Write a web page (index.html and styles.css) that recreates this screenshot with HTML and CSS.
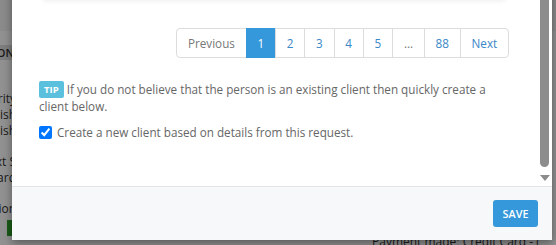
FILE: index.html
```html
<!DOCTYPE html>
<html lang="en">
<head>
    <meta charset="UTF-8">
    <title>New client</title>
    <link rel="stylesheet" href="styles.css">
</head>
<body>
    <!-- page behind the dialog -->
    <div class="page">
        <div class="page-rule"></div>
        <div class="page-head"><span>ACTION</span></div>
        <div class="page-rows">
            <div class="page-row"><span>Priority</span></div>
            <div class="page-row"><span>English</span></div>
            <div class="page-row"><span>English</span></div>
            <div class="page-row spaced"><span>Next S</span></div>
            <div class="page-row"><span>Standard</span></div>
            <div class="page-row spaced"><span>Action</span></div>
            <div class="page-row"><span class="page-btn"></span></div>
        </div>
        <div class="page-foot">Payment made; Credit Card - (</div>
    </div>
    <div class="backdrop"></div>

    <div class="modal">
        <div class="modal-main">
            <div class="modal-body">
                <div class="result-card"></div>

                <nav class="pagination">
                    <a class="page-link muted">Previous</a>
                    <a class="page-link active">1</a>
                    <a class="page-link">2</a>
                    <a class="page-link">3</a>
                    <a class="page-link">4</a>
                    <a class="page-link">5</a>
                    <a class="page-link muted">…</a>
                    <a class="page-link">88</a>
                    <a class="page-link">Next</a>
                </nav>

                <p class="tip"><span class="tip-label">TIP</span> If you do not believe that the person is an existing client then quickly create a client below.</p>

                <label class="check">
                    <input type="checkbox" checked>
                    <span>Create a new client based on details from this request.</span>
                </label>
            </div>
            <div class="scrollbar">
                <div class="scroll-thumb"></div>
                <div class="scroll-arrow"></div>
            </div>
        </div>
        <div class="modal-footer">
            <button class="btn-save">Save</button>
        </div>
    </div>
</body>
</html>
```

FILE: styles.css
```css
* {
    margin: 0;
    padding: 0;
    box-sizing: border-box;
}

body {
    font-family: 'Open Sans', 'Noto Sans', sans-serif;
    font-size: 11.7px;
    color: #666;
    width: 556px;
    height: 245px;
    overflow: hidden;
    position: relative;
    background: #fff;
}

/* Страница под диалогом */
.page {
    height: 245px;
    display: flex;
    flex-direction: column;
    color: #333;
    font-size: 12px;
}

.page-rule {
    height: 38px;
    border-bottom: 1px solid #fff;
    background: #f5f5f5;
}

.page-head {
    margin-top: 13px;
    height: 18px;
    width: 14px;
    background: #ddd;
    display: flex;
    justify-content: flex-end;
    align-items: center;
    font-weight: 600;
    font-size: 11px;
    white-space: nowrap;
}

.page-rows {
    width: 16px;
    padding-top: 31px;
}

.page-row {
    display: flex;
    justify-content: flex-end;
    height: 16px;
    line-height: 16px;
    white-space: nowrap;
}

.page-row.spaced {
    margin-top: 15px;
}

.page-btn {
    width: 9px;
    height: 16px;
    margin-top: 3px;
    background: #2fa12a;
    border-radius: 0 3px 3px 0;
}

.page-foot {
    margin-top: auto;
    margin-bottom: -5px;
    padding-left: 372px;
    line-height: 17px;
    white-space: nowrap;
}

.backdrop {
    position: absolute;
    inset: 0;
    background: rgba(0, 0, 0, 0.43);
}

/* Диалог */
.modal {
    position: absolute;
    left: 12px;
    top: -40px;
    bottom: 5px;
    width: 540px;
    display: flex;
    flex-direction: column;
    background: #fff;
    box-shadow: 0 3px 9px rgba(0, 0, 0, 0.4);
}

.modal-main {
    flex: 1;
    display: flex;
    min-height: 0;
}

.modal-body {
    flex: 1;
    padding: 0 28px 0 27px;
}

.result-card {
    height: 40px;
    margin: 0 4px;
    box-shadow: 0 1px 5px rgba(0, 0, 0, 0.07);
}

.pagination {
    display: flex;
    justify-content: flex-end;
    margin-top: 28px;
}

.page-link {
    border: 1px solid #ddd;
    margin-left: -1px;
    padding: 0 10.8px;
    height: 30px;
    line-height: 28px;
    color: #3a87c8;
    cursor: pointer;
}

.page-link:first-child {
    border-radius: 4px 0 0 4px;
}

.page-link:last-child {
    border-radius: 0 4px 4px 0;
}

.page-link.muted {
    color: #777;
}

.page-link.active {
    background: #3498db;
    border-color: #3498db;
    color: #fff;
}

.tip {
    margin-top: 23px;
    line-height: 17px;
}

.tip-label {
    display: inline-block;
    background: #5bc0de;
    color: #fff;
    font-size: 9.5px;
    font-weight: 700;
    line-height: 17px;
    padding: 0 5px;
    border-radius: 2px;
    vertical-align: top;
}

.check {
    display: flex;
    align-items: center;
    gap: 5px;
    margin-top: 9px;
    line-height: 17px;
}

.check input {
    width: 13px;
    height: 13px;
    margin: 0;
    accent-color: #0075ff;
}

/* Полоса прокрутки */
.scrollbar {
    width: 15px;
    display: flex;
    flex-direction: column;
    align-items: center;
    padding-bottom: 5px;
}

.scroll-thumb {
    flex: 1;
    width: 9px;
    background: #8c8c8c;
    border-radius: 0 0 5px 5px;
    margin-bottom: 8px;
}

.scroll-arrow {
    width: 0;
    height: 0;
    border-left: 5px solid transparent;
    border-right: 5px solid transparent;
    border-top: 6px solid #8c8c8c;
}

.modal-footer {
    height: 54px;
    border-top: 1px solid #e3e5e8;
    background: #f7f8fa;
    display: flex;
    justify-content: flex-end;
    align-items: center;
    padding: 0 14px;
}

.btn-save {
    font-family: inherit;
    font-size: 10.8px;
    font-weight: 600;
    text-transform: uppercase;
    color: #fff;
    background: #3498db;
    border: none;
    border-radius: 3px;
    width: 45px;
    height: 27px;
    cursor: pointer;
}
```
